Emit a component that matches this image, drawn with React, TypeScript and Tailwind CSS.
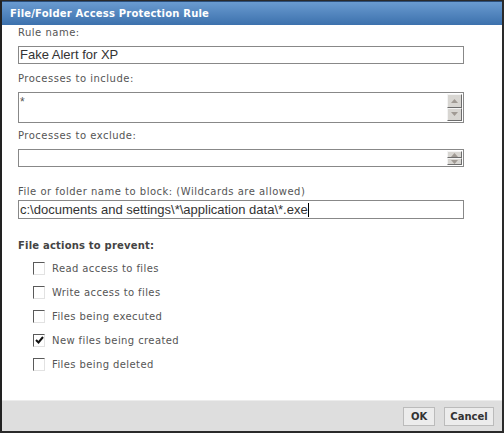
import React from "react";

const labelFont = { fontFamily: "'DejaVu Sans', Verdana, sans-serif" };
const inputFont = { fontFamily: "'Liberation Sans', Arial, sans-serif" };

function Spinner({ small }: { small?: boolean }) {
  const h = small ? "h-[8px]" : "h-[14px]";
  return (
    <div className="absolute right-[1px] top-[1px] bottom-[1px] flex flex-col justify-between w-[15px]">
      <div className={`${h} w-[15px] bg-[#d8d6d2] border border-t-[#f4f4f4] border-l-[#f4f4f4] border-r-[#6d6d6d] border-b-[#6d6d6d] flex items-center justify-center`}>
        <svg width="7" height="4" viewBox="0 0 7 4"><path d="M0 4 L3.5 0 L7 4 Z" fill="#a09a94" /></svg>
      </div>
      <div className={`${h} w-[15px] bg-[#d8d6d2] border border-t-[#f4f4f4] border-l-[#f4f4f4] border-r-[#6d6d6d] border-b-[#6d6d6d] flex items-center justify-center`}>
        <svg width="7" height="4" viewBox="0 0 7 4"><path d="M0 0 L3.5 4 L7 0 Z" fill="#a09a94" /></svg>
      </div>
    </div>
  );
}

function Check({ label, checked }: { label: string; checked?: boolean }) {
  return (
    <div className="flex items-center h-[24px]">
      <div className="w-[12px] h-[13px] border border-t-[#5a5a5a] border-l-[#5a5a5a] border-r-[#e2e2e2] border-b-[#e2e2e2] bg-white flex items-center justify-center">
        {checked && (
          <svg width="9" height="8" viewBox="0 0 9 8">
            <path d="M1 4 L3.5 6.5 L8 1" stroke="#111" strokeWidth="2" fill="none" />
          </svg>
        )}
      </div>
      <span className="ml-[7px] text-[10px] text-[#555] tracking-[0.4px]" style={labelFont}>
        {label}
      </span>
    </div>
  );
}

export default function App() {
  return (
    <div className="w-[504px] h-[433px] bg-[#2a2a2a] pt-[1px]">
      <div className="w-[502px] h-[430px] bg-white flex flex-col border-l-2 border-[#222]">
        <div
          className="h-[24px] flex items-center px-[8px] bg-gradient-to-b from-[#6a9bd0] to-[#3c71ad] border-t border-[#2b4f7c]"
          style={labelFont}
        >
          <span className="text-white font-bold text-[10px] tracking-[0.2px]">
            File/Folder Access Protection Rule
          </span>
        </div>

        <div className="flex-1 px-[16px] pt-[1px]" style={labelFont}>
          <div className="text-[10px] text-[#555] tracking-[0.5px] h-[14px] leading-[14px]">Rule name:</div>
          <div className="mt-[6px] w-[446px] h-[18px] border border-[#888] flex items-center pl-[1px] text-[13px] text-[#333]" style={inputFont}>
            Fake Alert for XP
          </div>

          <div className="mt-[8px] text-[10px] text-[#555] tracking-[0.5px] h-[14px] leading-[14px]">Processes to include:</div>
          <div className="relative mt-[6px] w-[446px] h-[31px] border border-[#888] text-[12px] text-[#555] pl-[1px]" style={inputFont}>
            *
            <Spinner />
          </div>

          <div className="mt-[6px] text-[10px] text-[#555] tracking-[0.5px] h-[14px] leading-[14px]">Processes to exclude:</div>
          <div className="relative mt-[6px] w-[446px] h-[18px] border border-[#888]">
            <Spinner small />
          </div>

          <div className="mt-[18px] text-[10px] text-[#555] tracking-[0.5px] h-[14px] leading-[14px]">
            File or folder name to block: (Wildcards are allowed)
          </div>
          <div className="mt-[1px] w-[446px] h-[19px] border border-[#888] flex items-center pl-[1px] text-[13px] text-[#333]" style={inputFont}>
            c:\documents and settings\*\application data\*.exe
            <span className="w-[1px] h-[14px] bg-black" />
          </div>

          <div className="mt-[20px] text-[10px] font-bold text-[#444] tracking-[0.2px] h-[14px] leading-[14px]">File actions to prevent:</div>
          <div className="mt-[3px] pl-[15px] flex flex-col">
            <Check label="Read access to files" />
            <Check label="Write access to files" />
            <Check label="Files being executed" />
            <Check label="New files being created" checked />
            <Check label="Files being deleted" />
          </div>
        </div>

        <div className="h-[31px] bg-[#dedede] border-t border-[#ececec] flex items-center justify-end gap-[9px] pr-[8px]" style={labelFont}>
          <div className="w-[32px] h-[19px] border border-[#bbb] bg-[#ececec] flex items-center justify-center text-[10px] font-bold text-[#333]">
            OK
          </div>
          <div className="w-[50px] h-[19px] border border-[#bbb] bg-[#ececec] flex items-center justify-center text-[10px] font-bold text-[#333]">
            Cancel
          </div>
        </div>
      </div>
    </div>
  );
}
